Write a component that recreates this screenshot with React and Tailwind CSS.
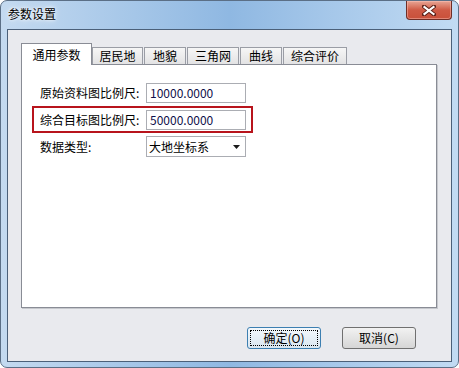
import React from 'react';

const font = { fontFamily: '"Noto Sans CJK SC", "Noto Sans", sans-serif' };

const tabs = [
  { label: '居民地', w: 'w-[51px]' },
  { label: '地貌', w: 'w-[42px]' },
  { label: '三角网', w: 'w-[52px]' },
  { label: '曲线', w: 'w-[42px]' },
  { label: '综合评价', w: 'w-[64px]' },
];

const CloseIcon = () => (
  <svg width="14" height="11" viewBox="0 0 14 11">
    <path d="M2 1.5 L12 9.5 M12 1.5 L2 9.5" stroke="#5a2018" strokeWidth="4" strokeLinecap="square" />
    <path d="M2.5 2 L11.5 9 M11.5 2 L2.5 9" stroke="#ffffff" strokeWidth="2.2" strokeLinecap="square" />
  </svg>
);

const Field = ({ label, value, highlight }) => (
  <div className={`flex h-[27px] w-[221px] items-center border-2 pl-[6px] ${highlight ? 'border-[#b8141c]' : 'border-transparent'}`}>
    <span className="w-[106px] text-[12px] leading-none text-black">{label}</span>
    <div className="flex h-[20px] w-[100px] items-center border border-[#abadb3] bg-white pl-[3px] text-[12px] text-[#10104a]">
      {value}
    </div>
  </div>
);

export default function App() {
  return (
    <div
      className="flex h-[368px] w-[459px] flex-col overflow-hidden rounded-[7px] border border-[#5b6f86] bg-gradient-to-r from-[#c4daf0] via-[#8fb8e2] to-[#c2dbf3]"
      style={font}
    >
      {/* Title bar */}
      <div className="flex h-[28px] items-start justify-between pl-[7px] pr-[6px]">
        <span className="mt-[5px] text-[12px] leading-[16px] text-black [text-shadow:0_0_6px_#ffffff,0_0_3px_#ffffff]">参数设置</span>
        <div className="flex h-[19px] w-[46px] items-center justify-center rounded-b-[4px] border border-t-0 border-[#6e2e27] bg-gradient-to-b from-[#e7a595] via-[#cf5a45] to-[#c9503a] shadow-[inset_0_0_0_1px_rgba(255,200,190,0.45)]">
          <CloseIcon />
        </div>
      </div>

      {/* Client area */}
      <div className="mx-[6px] mb-[5px] flex flex-1 flex-col border border-[#4b6079] bg-[#e9eaee] pl-[13px] pr-[14px] pt-[13px]">
        {/* Tabs */}
        <div className="flex h-[21px] items-end">
          <div className="relative z-10 -mb-px flex h-[22px] w-[71px] items-start justify-center border border-b-0 border-[#898c95] bg-white pt-[2px] text-[12px] text-black">
            通用参数
          </div>
          <div className="flex items-end gap-[1px]">
            {tabs.map((t) => (
              <div
                key={t.label}
                className={`flex h-[17px] ${t.w} items-center justify-center border border-b-0 border-[#9a9da5] bg-gradient-to-b from-[#f6f6f6] to-[#e3e3e4] text-[12px] leading-none text-black`}
              >
                {t.label}
              </div>
            ))}
          </div>
        </div>

        {/* Panel */}
        <div className="flex h-[244px] flex-col border border-[#898c95] bg-white pl-[10px] pt-[14px] shadow-[1px_1px_0_#c6c8cd]">
          <Field label="原始资料图比例尺:" value="10000.0000" />
          <Field label="综合目标图比例尺:" value="50000.0000" highlight />
          <div className="flex h-[27px] w-[221px] items-center border-2 border-transparent pl-[6px]">
            <span className="w-[106px] text-[12px] leading-none text-black">数据类型:</span>
            <div className="flex h-[21px] w-[100px] items-center justify-between border border-[#abadb3] bg-white pl-[2px] pr-[5px] text-[12px] text-black">
              <span>大地坐标系</span>
              <svg width="7" height="4" viewBox="0 0 7 4">
                <path d="M0 0 H7 L3.5 4 Z" fill="#1a1a1a" />
              </svg>
            </div>
          </div>
        </div>

        {/* Buttons */}
        <div className="mt-[19px] flex justify-end gap-[21px] pr-[21px]">
          <div className="flex h-[22px] w-[74px] items-center justify-center rounded-[3px] border border-[#3c7fb1] bg-gradient-to-b from-[#f3f8fc] to-[#d9e6f0] p-[2px]">
            <div className="flex h-full w-full items-center justify-center border border-dotted border-black text-[12px] leading-none text-black">
              确定(O)
            </div>
          </div>
          <div className="flex h-[22px] w-[74px] items-center justify-center rounded-[3px] border border-[#707070] bg-gradient-to-b from-[#f2f2f2] to-[#d6d6d6] text-[12px] leading-none text-black">
            取消(C)
          </div>
        </div>
      </div>
    </div>
  );
}
